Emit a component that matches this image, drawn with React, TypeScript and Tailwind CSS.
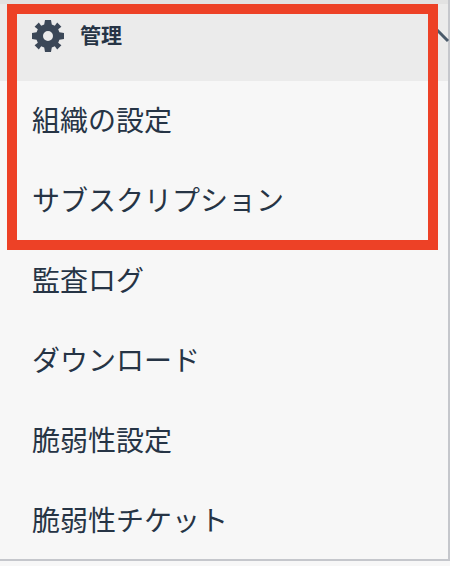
const items = ['組織の設定', 'サブスクリプション', '監査ログ', 'ダウンロード', '脆弱性設定', '脆弱性チケット'];

const App = () => {
  return (
    <div className="relative w-[450px] h-[566px] overflow-hidden bg-[#f7f7f7] font-['Liberation_Sans','Noto_Sans_CJK_JP',sans-serif] text-[#263445]">
      <div className="w-[450px] h-[559px] border-r-2 border-[#c5c7cc] flex flex-col">
        <div className="relative h-[81px] shrink-0 bg-[#ebebeb] border-t-4 border-[#e2e2e2] flex items-start pl-[32px] pt-[16px]">
          <svg viewBox="0 0 32 32" className="w-[32px] h-[32px] text-[#3b4757]" fill="currentColor">
            <path
              fillRule="evenodd"
              d="M13 0H19L19.800 4.600L22.800 5.800L25.200 2.600L29.400 6.800L26.200 9.200L27.400 12.200L32 13V19L27.400 19.800L26.200 22.800L29.400 25.200L25.200 29.400L22.800 26.200L19.800 27.400L19 32H13L12.200 27.400L9.200 26.200L6.800 29.400L2.600 25.200L5.800 22.800L4.600 19.800L0 19V13L4.600 12.200L5.800 9.200L2.600 6.800L6.800 2.600L9.200 5.800L12.200 4.600Z M16 11a5 5 0 1 0 0 10 5 5 0 0 0 0-10z"
            />
          </svg>
          <span className="ml-[16px] text-[21px] leading-[31px] font-bold">管理</span>
          <svg viewBox="0 0 14 14" className="absolute left-[436px] top-[25px] w-[14px] h-[14px] text-[#4a5a6a]" fill="none" stroke="currentColor" strokeWidth="3">
            <path d="M1 1l11 11" />
          </svg>
        </div>
        <ul className="flex flex-col">
          {items.map((item) => (
            <li key={item} className="h-[80px] flex items-center pl-[32px] pt-[2px] text-[28px] leading-none">
              {item}
            </li>
          ))}
        </ul>
      </div>
      <div className="h-[2px] bg-[#c5c7cc]" />
      <div className="absolute left-[7px] top-[4px] w-[431px] h-[246px] border-[10px] border-[#ed4126] pointer-events-none" />
    </div>
  );
};

export default App;
